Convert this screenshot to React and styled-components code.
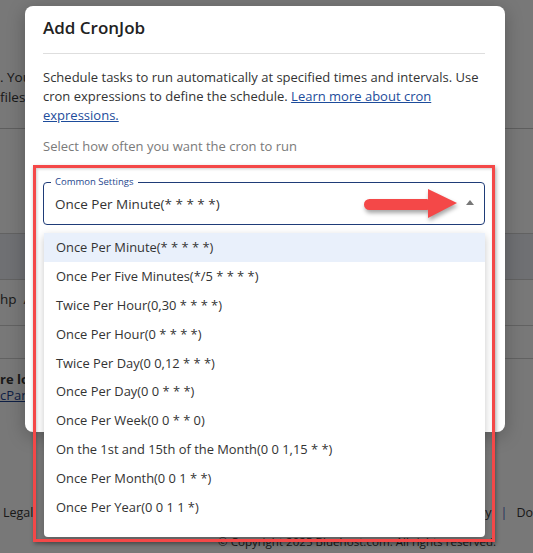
import React from 'react';
import styled, { createGlobalStyle } from 'styled-components';

const GlobalStyle = createGlobalStyle`
  html, body {
    margin: 0;
    padding: 0;
    background: #f0f0f0;
    font-family: "Open Sans", "Noto Sans", Arial, sans-serif;
    color: #333;
  }
`;

const Stage = styled.div`
  position: relative;
  width: 533px;
  height: 553px;
  overflow: hidden;
  background: #f0f0f0;
`;

/* page behind the dialog */
const Page = styled.div`
  display: flex;
  flex-direction: column;
  padding-top: 67px;
  font-size: 13.5px;
  color: #333;
`;

const Intro = styled.p`
  margin: 0;
  line-height: 20px;
  white-space: nowrap;
`;

const Rule = styled.div`
  height: 1px;
  background: #bdbdbd;
  margin-top: ${p => p.$top || 0}px;
`;

const TableHead = styled.div`
  margin-top: 104px;
  height: 45px;
  background: #dfe1e6;
  border-top: 1px solid #c4c4c4;
  border-bottom: 1px solid #c4c4c4;
`;

const TableRow = styled.div`
  height: ${p => p.$h}px;
  display: flex;
  align-items: center;
  border-bottom: 1px solid #c4c4c4;
  white-space: nowrap;
  padding-bottom: 8px;
  box-sizing: border-box;
`;

const Notice = styled.div`
  margin-top: 12px;
  display: flex;
  flex-direction: column;
  font-size: 13px;
  line-height: 17px;
  white-space: nowrap;
  b { font-weight: 700; }
  a { color: #1d3f8a; text-decoration: underline; margin-top: -1px; }
`;

const Footer = styled.div`
  margin-top: 100px;
  display: flex;
  justify-content: space-between;
  font-size: 12.5px;
  white-space: nowrap;
  padding-left: 3px;
  span.sep { color: #4b63b8; margin: 0 9px; }
`;

const Copyright = styled.div`
  margin-top: 13px;
  padding-left: 218px;
  font-size: 11.6px;
  white-space: nowrap;
`;

const Backdrop = styled.div`
  position: absolute;
  inset: 0;
  background: rgba(0, 0, 0, 0.5);
`;

const Modal = styled.div`
  position: absolute;
  left: 25px;
  top: 6px;
  width: 480px;
  height: 426px;
  box-sizing: border-box;
  padding: 10px 20px 0 18px;
  background: #fff;
  border-radius: 8px;
  box-shadow: 0 4px 18px rgba(0, 0, 0, 0.25);
`;

const Title = styled.h2`
  margin: 0;
  font-size: 17px;
  line-height: 24px;
  font-weight: 600;
  color: #222;
  padding-bottom: 13px;
  border-bottom: 1px solid #dedede;
`;

const Description = styled.p`
  margin: 14px 0 0;
  font-size: 13px;
  line-height: 19px;
  color: #333;
  a { color: #1d4c9b; text-decoration: underline; }
`;

const Hint = styled.p`
  margin: 12px 0 0;
  font-size: 13px;
  line-height: 19px;
  color: #7a7a7a;
`;

const SelectWrap = styled.div`
  position: relative;
  margin-top: 26px;
`;

const Field = styled.div`
  position: relative;
  height: 43px;
  box-sizing: border-box;
  padding-left: 11px;
  border: 1px solid #1f3c78;
  border-radius: 4px;
  display: flex;
  align-items: center;
`;

/* floating label sitting on the top border */
const Label = styled.span`
  position: absolute;
  left: 7px;
  top: -7px;
  padding: 0 4px;
  background: #fff;
  font-size: 9.5px;
  line-height: 12px;
  color: #26478e;
`;

const Value = styled.div`
  flex: 1;
  font-size: 13.5px;
  color: #333;
`;

const Caret = styled.div`
  width: 0;
  height: 0;
  border-left: 4px solid transparent;
  border-right: 4px solid transparent;
  border-bottom: 5px solid #777;
  margin: -2px 10px 0 0;
`;

const Menu = styled.ul`
  position: absolute;
  top: calc(100% + 8px);
  left: 1px;
  right: 0;
  list-style: none;
  margin: 0;
  padding: 0 0 16px;
  background: #fff;
  border-radius: 0 0 4px 4px;
  box-shadow: 0 3px 9px rgba(0, 0, 0, 0.22);
`;

const Option = styled.li`
  height: 28.8px;
  display: flex;
  align-items: center;
  padding-left: 12px;
  font-size: 12.9px;
  color: #333;
  background: ${p => (p.$active ? '#e9f0fb' : 'transparent')};
`;

const Highlight = styled.div`
  position: absolute;
  left: 33px;
  top: 165px;
  width: 462px;
  height: 377px;
  box-sizing: border-box;
  border: 3px solid #f44848;
  box-shadow: 1px 2px 4px rgba(0, 0, 0, 0.35), inset 1px 1px 3px rgba(0, 0, 0, 0.2);
  pointer-events: none;
`;

const Pointer = styled.svg`
  position: absolute;
  left: 358px;
  top: 183px;
  overflow: visible;
  filter: drop-shadow(1px 3px 2px rgba(0, 0, 0, 0.35));
`;

const options = [
  'Once Per Minute(* * * * *)',
  'Once Per Five Minutes(*/5 * * * *)',
  'Twice Per Hour(0,30 * * * *)',
  'Once Per Hour(0 * * * *)',
  'Twice Per Day(0 0,12 * * *)',
  'Once Per Day(0 0 * * *)',
  'Once Per Week(0 0 * * 0)',
  'On the 1st and 15th of the Month(0 0 1,15 * *)',
  'Once Per Month(0 0 1 * *)',
  'Once Per Year(0 0 1 1 *)',
];

export default function App() {
  return (
    <Stage>
      <GlobalStyle />
      <Page>
        <Intro>. You</Intro>
        <Intro>files</Intro>
        <Rule $top={21} />
        <TableHead />
        <TableRow $h={46}>hp &nbsp;/</TableRow>
        <TableRow $h={33} />
        <Notice>
          <b>re lo</b>
          <a href="#cpanel">cPan</a>
        </Notice>
        <Footer>
          <span>Legal<span className="sep">|</span></span>
          <span>cy<span className="sep">|</span>Do</span>
        </Footer>
        <Copyright>© Copyright 2025 Bluehost.com. All rights reserved.</Copyright>
      </Page>

      <Backdrop />

      <Modal>
        <Title>Add CronJob</Title>
        <Description>
          Schedule tasks to run automatically at specified times and intervals. Use
          cron expressions to define the schedule.{' '}
          <a href="#cron">Learn more about cron expressions.</a>
        </Description>
        <Hint>Select how often you want the cron to run</Hint>
        <SelectWrap>
          <Field>
            <Label>Common Settings</Label>
            <Value>Once Per Minute(* * * * *)</Value>
            <Caret />
          </Field>
          <Menu>
            {options.map((o, i) => (
              <Option key={o} $active={i === 0}>{o}</Option>
            ))}
          </Menu>
        </SelectWrap>
      </Modal>

      <Highlight />
      <Pointer width="104" height="42" viewBox="0 0 104 42">
        <rect x="6" y="16" width="68" height="11" rx="5.5" fill="#f44848" />
        <polygon points="70,6 99,20 70,35" fill="#f44848" />
      </Pointer>
    </Stage>
  );
}
